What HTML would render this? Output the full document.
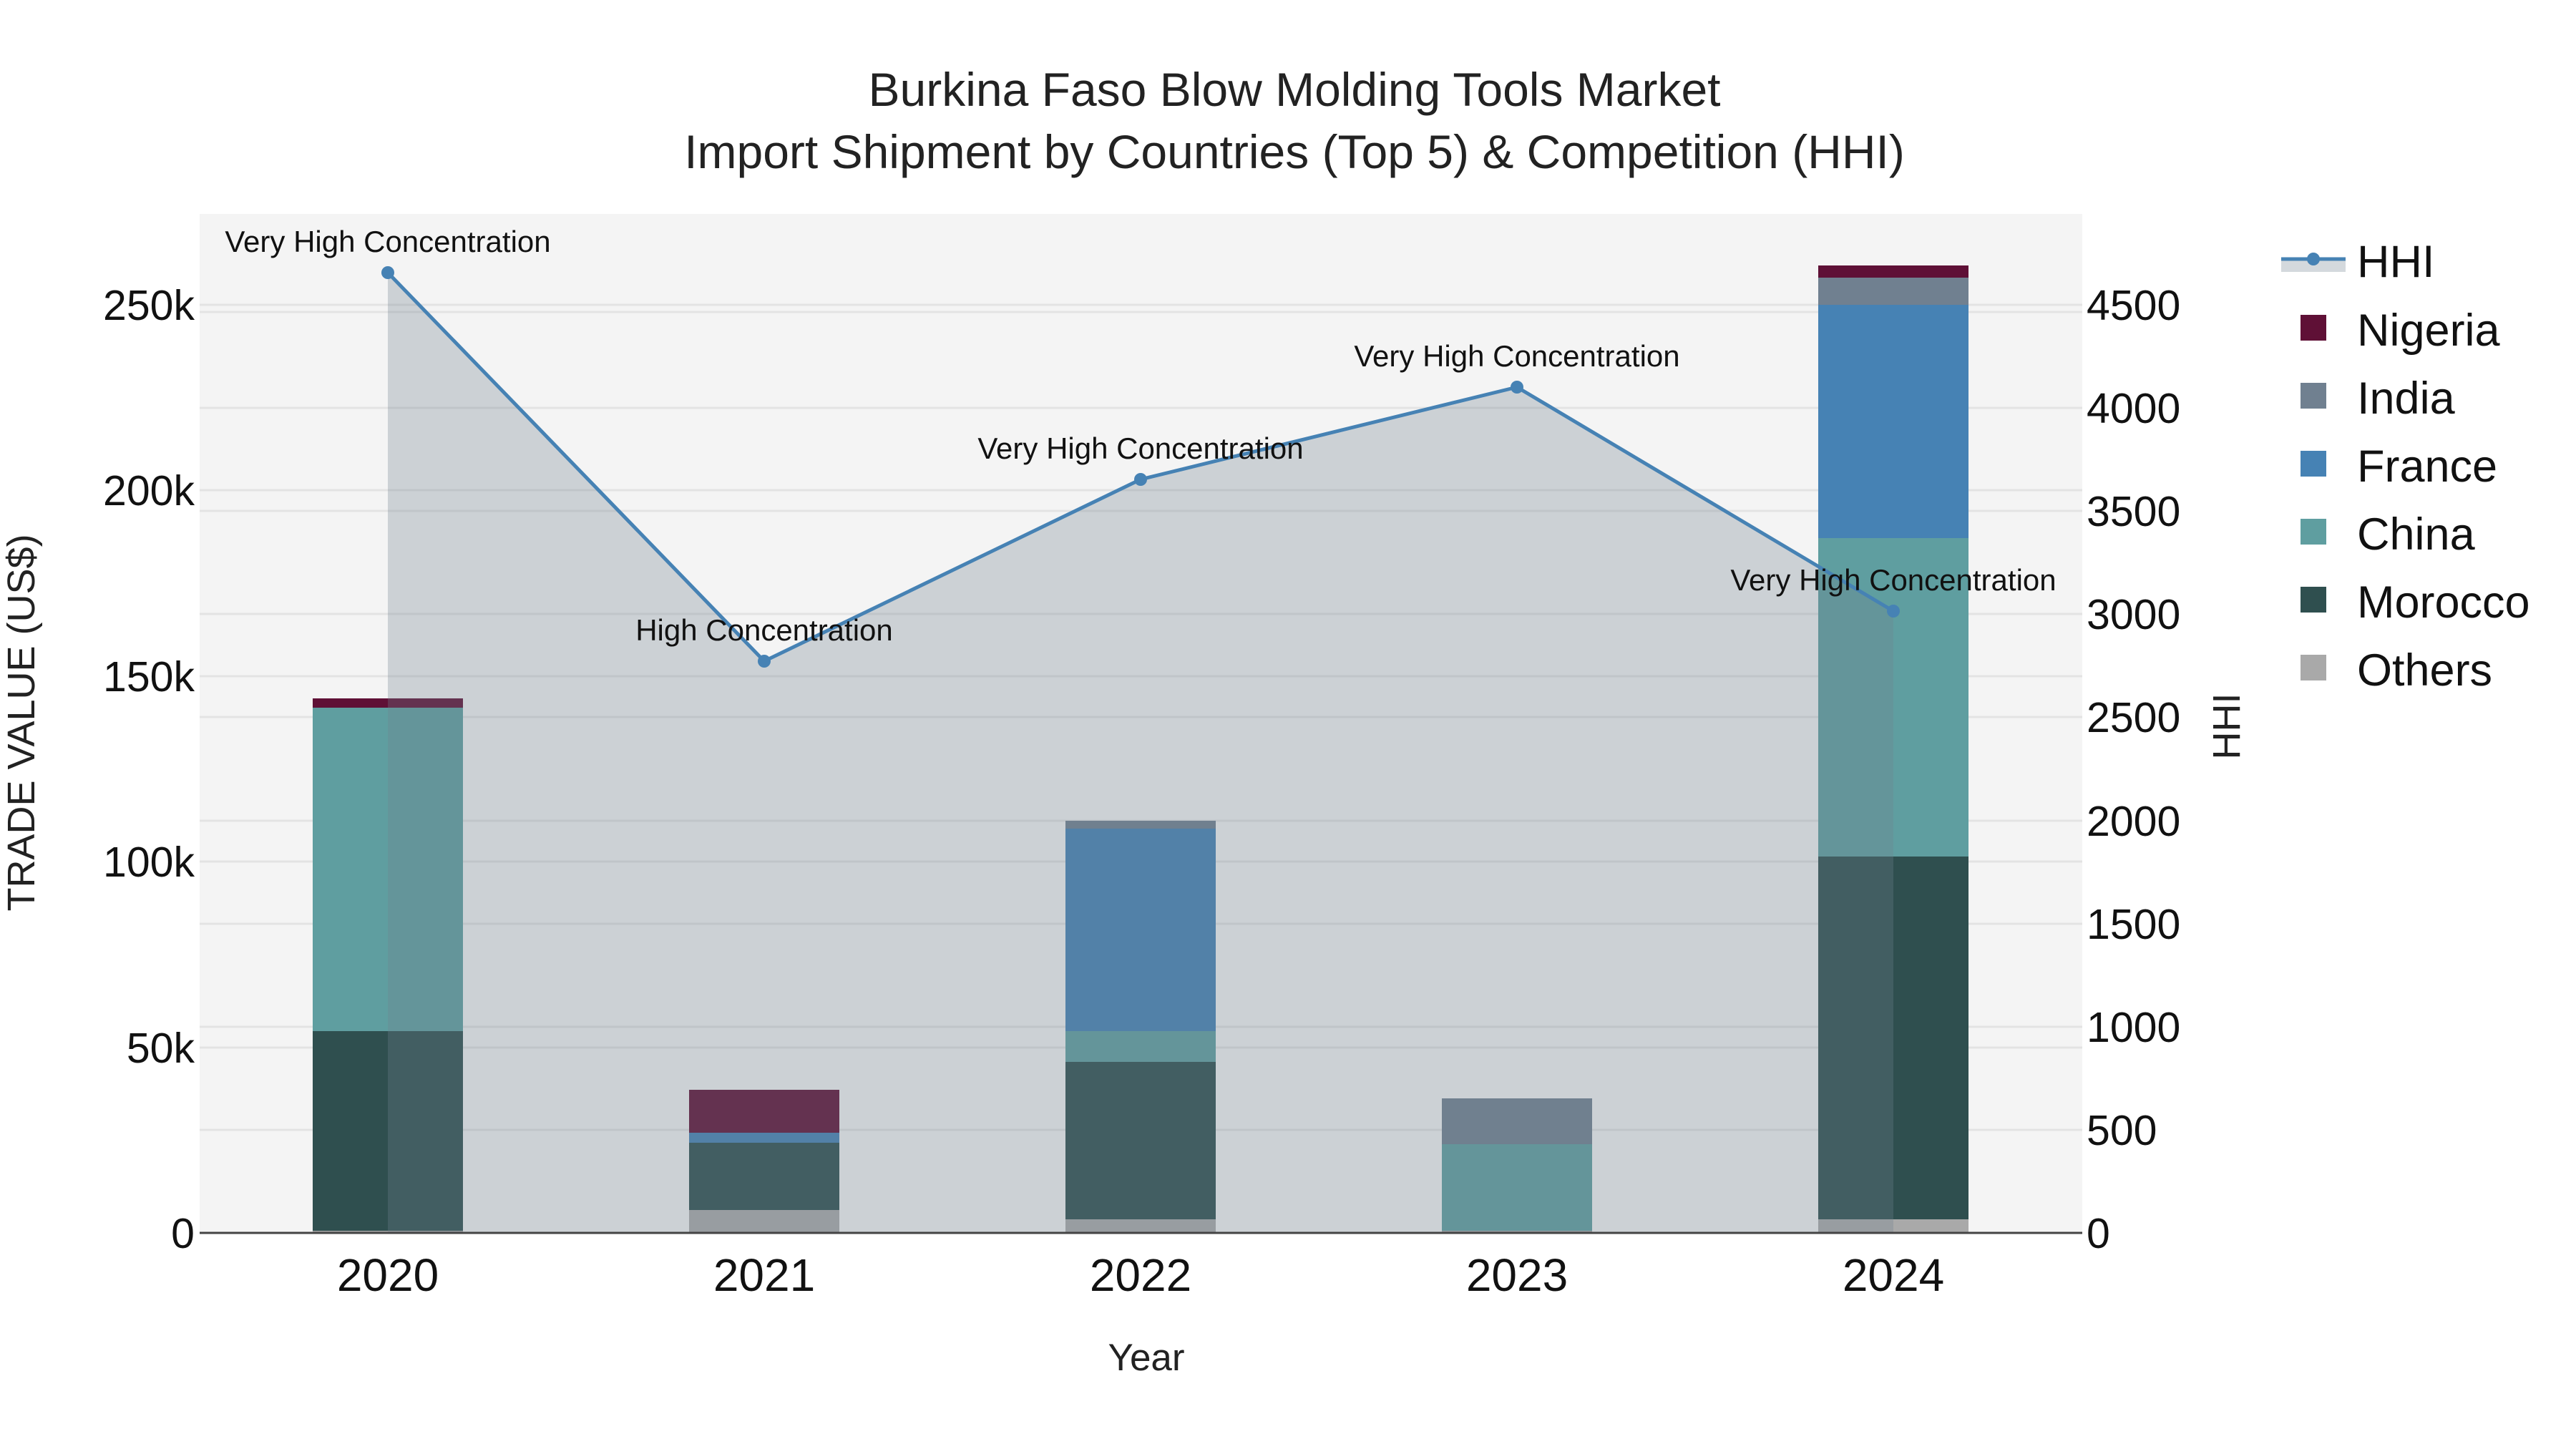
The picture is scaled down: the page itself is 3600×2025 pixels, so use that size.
<!DOCTYPE html>
<html><head><meta charset="utf-8"><style>
html,body{margin:0;padding:0;background:#fff;}
svg{display:block;font-family:"Liberation Sans",sans-serif;}
</style></head><body>
<svg width="3600" height="2025" viewBox="0 0 3600 2025" xmlns="http://www.w3.org/2000/svg">
<rect x="0" y="0" width="3600" height="2025" fill="#fff"/>
<rect x="279" y="299" width="2631" height="1424" fill="#f4f4f4"/>
<g stroke="#e3e3e3" stroke-width="3">
<line x1="279" x2="2910" y1="1464" y2="1464"/><line x1="279" x2="2910" y1="1204" y2="1204"/>
<line x1="279" x2="2910" y1="945" y2="945"/><line x1="279" x2="2910" y1="685" y2="685"/>
<line x1="279" x2="2910" y1="426" y2="426"/>
<line x1="279" x2="2910" y1="1579" y2="1579"/><line x1="279" x2="2910" y1="1435" y2="1435"/>
<line x1="279" x2="2910" y1="1291" y2="1291"/><line x1="279" x2="2910" y1="1147" y2="1147"/>
<line x1="279" x2="2910" y1="1002" y2="1002"/><line x1="279" x2="2910" y1="858" y2="858"/>
<line x1="279" x2="2910" y1="714" y2="714"/><line x1="279" x2="2910" y1="570" y2="570"/>
<line x1="279" x2="2910" y1="436" y2="436"/>
</g>
<g>
<rect x="437" y="1720" width="210" height="3" fill="#a9a9a9"/>
<rect x="437" y="1441" width="210" height="279" fill="#2f4f4f"/>
<rect x="437" y="989" width="210" height="452" fill="#5f9ea0"/>
<rect x="437" y="976" width="210" height="13" fill="#5f1036"/>

<rect x="963" y="1691" width="210" height="32" fill="#a9a9a9"/>
<rect x="963" y="1597" width="210" height="94" fill="#2f4f4f"/>
<rect x="963" y="1583" width="210" height="14" fill="#4682b4"/>
<rect x="963" y="1523" width="210" height="60" fill="#5f1036"/>

<rect x="1489" y="1704" width="210" height="19" fill="#a9a9a9"/>
<rect x="1489" y="1484" width="210" height="220" fill="#2f4f4f"/>
<rect x="1489" y="1441" width="210" height="43" fill="#5f9ea0"/>
<rect x="1489" y="1158" width="210" height="283" fill="#4682b4"/>
<rect x="1489" y="1147" width="210" height="11" fill="#708090"/>

<rect x="2015" y="1720" width="210" height="3" fill="#a9a9a9"/>
<rect x="2015" y="1599" width="210" height="121" fill="#5f9ea0"/>
<rect x="2015" y="1535" width="210" height="64" fill="#708090"/>

<rect x="2541" y="1704" width="210" height="19" fill="#a9a9a9"/>
<rect x="2541" y="1197" width="210" height="507" fill="#2f4f4f"/>
<rect x="2541" y="752" width="210" height="445" fill="#5f9ea0"/>
<rect x="2541" y="426" width="210" height="326" fill="#4682b4"/>
<rect x="2541" y="388" width="210" height="38" fill="#708090"/>
<rect x="2541" y="371" width="210" height="17" fill="#5f1036"/>
</g>
<polygon points="542,1723 542,381 1068,924 1594,670 2120,541 2646,854 2646,1723" fill="#708090" fill-opacity="0.3"/>
<polyline points="542,381 1068,924 1594,670 2120,541 2646,854" fill="none" stroke="#4682b4" stroke-width="5"/>
<g fill="#4682b4">
<circle cx="542" cy="381" r="9"/><circle cx="1068" cy="924" r="9"/><circle cx="1594" cy="670" r="9"/><circle cx="2120" cy="541" r="9"/><circle cx="2646" cy="854" r="9"/>
</g>
<line x1="279" x2="2910" y1="1723" y2="1723" stroke="#444" stroke-width="3"/>
<g font-size="42" fill="#111" text-anchor="middle">
<text x="542" y="352">Very High Concentration</text>
<text x="1068" y="895">High Concentration</text>
<text x="1594" y="641">Very High Concentration</text>
<text x="2120" y="512">Very High Concentration</text>
<text x="2646" y="825">Very High Concentration</text>
</g>
<g font-size="59" fill="#111" text-anchor="end">
<text x="272" y="1744">0</text><text x="272" y="1485">50k</text><text x="272" y="1225">100k</text>
<text x="272" y="966">150k</text><text x="272" y="706">200k</text><text x="272" y="447">250k</text>
</g>
<g font-size="59" fill="#111" text-anchor="start">
<text x="2916" y="1744">0</text><text x="2916" y="1600">500</text><text x="2916" y="1456">1000</text>
<text x="2916" y="1312">1500</text><text x="2916" y="1168">2000</text><text x="2916" y="1023">2500</text>
<text x="2916" y="879">3000</text><text x="2916" y="735">3500</text><text x="2916" y="591">4000</text>
<text x="2916" y="447">4500</text>
</g>
<g font-size="64" fill="#111" text-anchor="middle">
<text x="542" y="1804">2020</text><text x="1068" y="1804">2021</text><text x="1594" y="1804">2022</text>
<text x="2120" y="1804">2023</text><text x="2646" y="1804">2024</text>
</g>
<text x="1602" y="1915" font-size="53" fill="#222" text-anchor="middle">Year</text>
<text transform="translate(48,1010) rotate(-90)" font-size="54" fill="#222" text-anchor="middle">TRADE VALUE (US$)</text>
<text transform="translate(3130,1015) rotate(-90)" font-size="54" fill="#222" text-anchor="middle">HHI</text>
<g font-size="66" fill="#222" text-anchor="middle">
<text x="1809" y="148">Burkina Faso Blow Molding Tools Market</text>
<text x="1809" y="235">Import Shipment by Countries (Top 5) &amp; Competition (HHI)</text>
</g>
<rect x="3188" y="362" width="90" height="18" fill="#708090" fill-opacity="0.3"/>
<line x1="3188" x2="3278" y1="362" y2="362" stroke="#4682b4" stroke-width="5"/>
<circle cx="3233" cy="362" r="9" fill="#4682b4"/>
<g>
<rect x="3215" y="440" width="36" height="36" fill="#5f1036"/>
<rect x="3215" y="535" width="36" height="36" fill="#708090"/>
<rect x="3215" y="630" width="36" height="36" fill="#4682b4"/>
<rect x="3215" y="725" width="36" height="36" fill="#5f9ea0"/>
<rect x="3215" y="820" width="36" height="36" fill="#2f4f4f"/>
<rect x="3215" y="915" width="36" height="36" fill="#a9a9a9"/>
</g>
<g font-size="63" fill="#111">
<text x="3294" y="387">HHI</text>
<text x="3294" y="483">Nigeria</text>
<text x="3294" y="578">India</text>
<text x="3294" y="673">France</text>
<text x="3294" y="768">China</text>
<text x="3294" y="863">Morocco</text>
<text x="3294" y="958">Others</text>
</g>
</svg>
</body></html>
